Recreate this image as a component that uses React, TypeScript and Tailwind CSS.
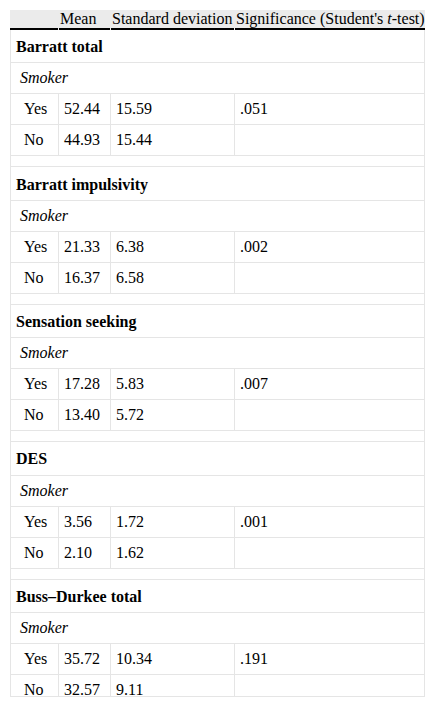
import React from "react";

type Section = { title: string; yes: [string, string, string]; no: [string, string] };

const sections: Section[] = [
  { title: "Barratt total", yes: ["52.44", "15.59", ".051"], no: ["44.93", "15.44"] },
  { title: "Barratt impulsivity", yes: ["21.33", "6.38", ".002"], no: ["16.37", "6.58"] },
  { title: "Sensation seeking", yes: ["17.28", "5.83", ".007"], no: ["13.40", "5.72"] },
  { title: "DES", yes: ["3.56", "1.72", ".001"], no: ["2.10", "1.62"] },
  { title: "Buss\u2013Durkee total", yes: ["35.72", "10.34", ".191"], no: ["32.57", "9.11"] },
];

const rowGrid = "grid grid-cols-[48px_52px_124px_190px] border-b border-[#e5e5e5]";
const cell = "border-r border-[#e5e5e5] flex items-center";

function DataRow({ label, vals }: { label: string; vals: string[] }) {
  return (
    <div className={`${rowGrid} h-[31px]`}>
      <div className={`${cell} pl-[13px]`}>{label}</div>
      <div className={`${cell} pl-[5px]`}>{vals[0]}</div>
      <div className={`${cell} pl-[5px]`}>{vals[1]}</div>
      <div className={`${cell} pl-[5px]`}>{vals[2] ?? ""}</div>
    </div>
  );
}

export default function App() {
  return (
    <div className="bg-white w-[435px] h-[707px] pt-[10px] pl-[10px] text-black font-['Liberation_Serif',serif] text-[16px] leading-[18px]">
      <div className="w-[415px] h-[687px] overflow-hidden border-b border-[#e5e5e5]">
        <div className="grid grid-cols-[49px_52px_124px_190px] bg-[#ebebeb]">
          {["", "Mean", "Standard deviation", ""].map((t, i) => (
            <div key={i} className="flex flex-col">
              <div className="h-[18px] pl-[1px] whitespace-nowrap">
                {i === 3 ? (
                  <span>
                    Significance (Student's <i>t</i>-test)
                  </span>
                ) : (
                  t
                )}
              </div>
              <div className={`h-[2px] bg-black ${i < 3 ? "mr-[1px]" : ""}`} />
            </div>
          ))}
        </div>
        <div className="bg-white border-l border-[#e5e5e5]">
          {sections.map((s) => (
            <div key={s.title}>
              <div className="h-[33.4px] border-b border-r border-[#e5e5e5] flex items-center pl-[5px] pt-[2px] font-bold">
                {s.title}
              </div>
              <div className="h-[31px] border-b border-r border-[#e5e5e5] flex items-center pl-[9px] italic">
                Smoker
              </div>
              <DataRow label="Yes" vals={s.yes} />
              <DataRow label="No" vals={s.no} />
              <div className="h-[11px] border-b border-r border-[#e5e5e5]" />
            </div>
          ))}
        </div>
      </div>
    </div>
  );
}
